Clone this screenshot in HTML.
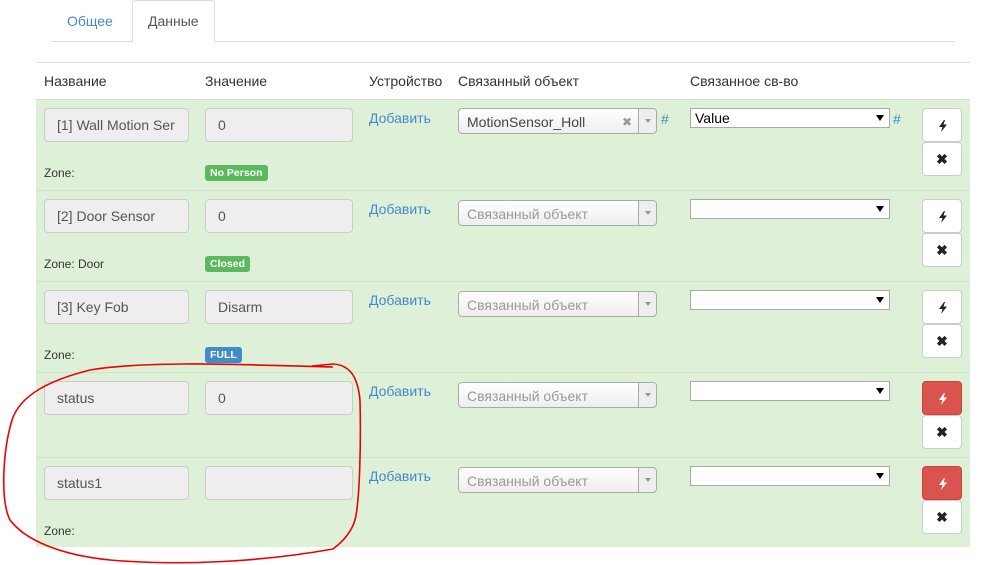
<!DOCTYPE html>
<html><head><meta charset="utf-8"><style>
*{box-sizing:border-box}
body{margin:0;width:985px;height:565px;background:#fff;font-family:"Liberation Sans",Arial,sans-serif;font-size:14px;color:#333;position:relative;overflow:hidden}
.a{position:absolute}
.tab{position:absolute;top:0;height:42px;line-height:42px;padding:0 15px;font-size:14px}
.row{position:absolute;left:36px;width:934px;background:#dff0d8;border-top:1px solid #d0e3c8}
.inp{position:absolute;height:34px;width:145px;background:#eee;border:1px solid #ccc;border-radius:4px;padding:0 12px;line-height:32px;color:#555}
.inp.v{width:148px}
.add{position:absolute;color:#428bca}
.s2{position:absolute;width:199px;height:26px;border:1px solid #aaa;border-radius:4px;background:linear-gradient(#fff,#eee);line-height:26px;padding-left:8px;color:#999}
.s2 .ar{position:absolute;right:0;top:0;width:18px;height:24px;border-left:1px solid #aaa;background:#eee;border-radius:0 4px 4px 0}
.s2 .ar:after{content:"";position:absolute;left:6px;top:10px;border:3px solid transparent;border-top:4px solid #999}
.sel{position:absolute;width:200px;height:20px;border:1px solid #a9a9a9;background:#fff;line-height:18px;padding-left:4px;color:#000}
.sel:after{content:"";position:absolute;right:5px;top:6px;border:4px solid transparent;border-top:6px solid #000}
.btn{position:absolute;width:40px;height:34px;background:#fff;border:1px solid #ccc;border-radius:4px;text-align:center;line-height:32px;font-weight:bold;color:#222}
.btn svg{position:absolute;left:15px;top:11px}
.btn.r{background:#d9534f;border-color:#d43f3a;color:#fff}
.zone{position:absolute;font-size:12px}
.lab{position:absolute;font-size:10.5px;font-weight:bold;color:#fff;padding:0 5px;height:16px;line-height:16px;border-radius:3px}
</style></head><body>
<div class="a" style="left:51px;top:41px;width:904px;height:1px;background:#ddd"></div>
<div class="tab" style="left:52px;color:#428bca">Общее</div>
<div class="tab" style="left:132px;width:83px;background:#fff;border:1px solid #ddd;border-bottom-color:#fff;border-radius:4px 4px 0 0;height:43px;line-height:41px;color:#555">Данные</div>
<div class="a" style="left:36px;top:62px;width:934px;height:1px;background:#ddd"></div>
<div class="a" style="left:44px;top:73px">Название</div>
<div class="a" style="left:205px;top:73px">Значение</div>
<div class="a" style="left:369px;top:73px">Устройство</div>
<div class="a" style="left:458px;top:73px">Связанный объект</div>
<div class="a" style="left:690px;top:73px">Связанное св-во</div>

<div class="row" style="top:99px;height:91px"></div>
<div class="row" style="top:190px;height:91px"></div>
<div class="row" style="top:281px;height:91px"></div>
<div class="row" style="top:372px;height:85px"></div>
<div class="row" style="top:457px;height:90px"></div>

<!-- row1 -->
<div class="inp" style="left:44px;top:108px">[1] Wall Motion Ser</div>
<div class="inp v" style="left:205px;top:108px">0</div>
<div class="add" style="left:369px;top:110px">Добавить</div>
<div class="s2" style="left:458px;top:108px;color:#444">MotionSensor_Holl<span style="position:absolute;left:163px;color:#999;font-size:12px">✖</span><div class="ar"></div></div>
<div class="add" style="left:661px;top:111px">#</div>
<div class="sel" style="left:690px;top:108px">Value</div>
<div class="add" style="left:893px;top:111px">#</div>
<div class="btn" style="left:922px;top:108px"><svg width="10" height="12" viewBox="0 0 10 12"><path d="M6 0L1 7H4.5L3 12L9 4.5H5.5L7 0Z" fill="#222"/></svg></div>
<div class="btn" style="left:922px;top:142px">✖</div>
<div class="zone" style="left:44px;top:166px">Zone:</div>
<div class="lab" style="left:205px;top:165px;background:#5cb85c">No Person</div>

<!-- row2 -->
<div class="inp" style="left:44px;top:199px">[2] Door Sensor</div>
<div class="inp v" style="left:205px;top:199px">0</div>
<div class="add" style="left:369px;top:201px">Добавить</div>
<div class="s2" style="left:458px;top:200px">Связанный объект<div class="ar"></div></div>
<div class="sel" style="left:690px;top:199px"></div>
<div class="btn" style="left:922px;top:199px"><svg width="10" height="12" viewBox="0 0 10 12"><path d="M6 0L1 7H4.5L3 12L9 4.5H5.5L7 0Z" fill="#222"/></svg></div>
<div class="btn" style="left:922px;top:233px">✖</div>
<div class="zone" style="left:44px;top:257px">Zone: Door</div>
<div class="lab" style="left:205px;top:256px;background:#5cb85c">Closed</div>

<!-- row3 -->
<div class="inp" style="left:44px;top:290px">[3] Key Fob</div>
<div class="inp v" style="left:205px;top:290px">Disarm</div>
<div class="add" style="left:369px;top:292px">Добавить</div>
<div class="s2" style="left:458px;top:291px">Связанный объект<div class="ar"></div></div>
<div class="sel" style="left:690px;top:290px"></div>
<div class="btn" style="left:922px;top:290px"><svg width="10" height="12" viewBox="0 0 10 12"><path d="M6 0L1 7H4.5L3 12L9 4.5H5.5L7 0Z" fill="#222"/></svg></div>
<div class="btn" style="left:922px;top:324px">✖</div>
<div class="zone" style="left:44px;top:348px">Zone:</div>
<div class="lab" style="left:205px;top:347px;background:#428bca">FULL</div>

<!-- row4 -->
<div class="inp" style="left:44px;top:381px">status</div>
<div class="inp v" style="left:205px;top:381px">0</div>
<div class="add" style="left:369px;top:383px">Добавить</div>
<div class="s2" style="left:458px;top:382px">Связанный объект<div class="ar"></div></div>
<div class="sel" style="left:690px;top:381px"></div>
<div class="btn r" style="left:922px;top:381px"><svg width="10" height="12" viewBox="0 0 10 12"><path d="M6 0L1 7H4.5L3 12L9 4.5H5.5L7 0Z" fill="#fff"/></svg></div>
<div class="btn" style="left:922px;top:415px">✖</div>

<!-- row5 -->
<div class="inp" style="left:44px;top:466px">status1</div>
<div class="inp v" style="left:205px;top:466px"></div>
<div class="add" style="left:369px;top:468px">Добавить</div>
<div class="s2" style="left:458px;top:467px">Связанный объект<div class="ar"></div></div>
<div class="sel" style="left:690px;top:466px"></div>
<div class="btn r" style="left:922px;top:466px"><svg width="10" height="12" viewBox="0 0 10 12"><path d="M6 0L1 7H4.5L3 12L9 4.5H5.5L7 0Z" fill="#fff"/></svg></div>
<div class="btn" style="left:922px;top:500px">✖</div>
<div class="zone" style="left:44px;top:524px">Zone:</div>

<svg class="a" style="left:0;top:0" width="985" height="565">
<path d="M333,367 C250,365 150,360 90,370 C50,380 20,395 12,420 C3,450 0,500 10,520 C25,540 60,555 110,560 C180,566 260,562 333,549 C345,540 352,530 355,520 C360,500 361,440 360,400 C358,380 352,365 333,364 L312,366" fill="none" stroke="#e00" stroke-width="1.6"/>
</svg>
</body></html>
